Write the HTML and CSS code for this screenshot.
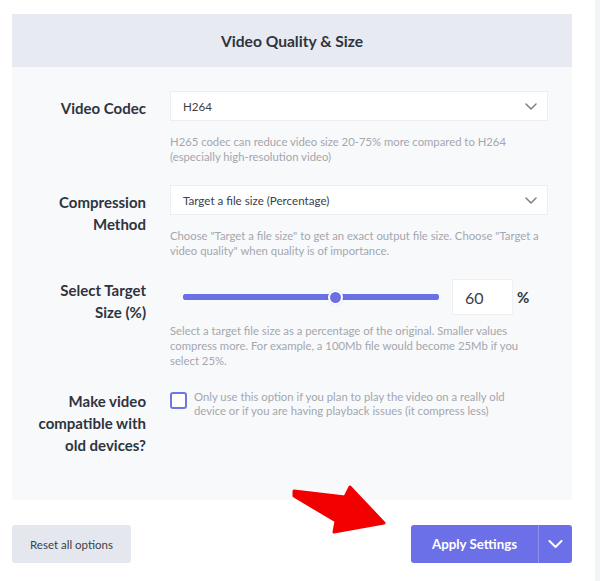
FILE: index.html
```html
<!DOCTYPE html>
<html lang="en">
<head>
    <meta charset="UTF-8">
    <meta name="viewport" content="width=device-width, initial-scale=1.0">
    <title>Video Quality &amp; Size</title>
    <link rel="stylesheet" href="styles.css">
</head>
<body>
<div class="page">
    <div class="main">
        <div class="panel">
            <div class="panel-head">Video Quality &amp; Size</div>
            <div class="panel-body">

                <div class="row">
                    <label class="label">Video Codec</label>
                    <div class="field">
                        <div class="select">
                            <span>H264</span>
                            <svg class="chev" width="12" height="7" viewBox="0 0 12 7"><path d="M1 1l5 5 5-5" fill="none" stroke="#7b8088" stroke-width="1.5" stroke-linecap="round" stroke-linejoin="round"/></svg>
                        </div>
                        <p class="help">H265 codec can reduce video size 20-75% more compared to H264 (especially high-resolution video)</p>
                    </div>
                </div>

                <div class="row">
                    <label class="label">Compression Method</label>
                    <div class="field">
                        <div class="select">
                            <span>Target a file size (Percentage)</span>
                            <svg class="chev" width="12" height="7" viewBox="0 0 12 7"><path d="M1 1l5 5 5-5" fill="none" stroke="#7b8088" stroke-width="1.5" stroke-linecap="round" stroke-linejoin="round"/></svg>
                        </div>
                        <p class="help">Choose "Target a file size" to get an exact output file size. Choose "Target a video quality" when quality is of importance.</p>
                    </div>
                </div>

                <div class="row row-slider">
                    <label class="label">Select Target Size (%)</label>
                    <div class="field">
                        <div class="slider-line">
                            <input type="range" class="range" min="0" max="100" value="60">
                            <input type="text" class="num" value="60">
                            <span class="pct">%</span>
                        </div>
                        <p class="help help-tight">Select a target file size as a percentage of the original. Smaller values compress more. For example, a 100Mb file would become 25Mb if you select 25%.</p>
                    </div>
                </div>

                <div class="row row-check">
                    <label class="label">Make video compatible with old devices?</label>
                    <div class="field check-line">
                        <input type="checkbox" class="check">
                        <p class="help help-check">Only use this option if you plan to play the video on a really old device or if you are having playback issues (it compress less)</p>
                    </div>
                </div>

            </div>
        </div>

        <div class="actions">
            <button class="btn-reset">Reset all options</button>
            <div class="btn-apply">
                <span class="apply-main">Apply Settings</span>
                <span class="apply-drop">
                    <svg width="15" height="8" viewBox="0 0 15 8"><path d="M1.5 1l6 6 6-6" fill="none" stroke="#fff" stroke-width="2" stroke-linecap="round" stroke-linejoin="round"/></svg>
                </span>
            </div>
        </div>

        <svg class="pointer" width="100" height="55" viewBox="0 0 100 55">
            <path d="M5 7 L56 13 L61 3 L95 39 L45 48 L47 37 L5 12 Z" fill="#f20000" stroke="#f20000" stroke-width="3" stroke-linejoin="round"/>
        </svg>
    </div>
    <div class="side"></div>
</div>
</body>
</html>
```

FILE: styles.css
```css
*{
    margin: 0;
    padding: 0;
    box-sizing: border-box;
}
body{
    background: #fff;
    font-family: Lato, "Noto Sans", sans-serif;
    color: #2e3440;
}
.page{
    display: flex;
    min-height: 581px;
}
.main{
    position: relative;
    width: 560px;
    margin: 14px 0 0 12px;
}
.side{
    flex: 1;
    margin-left: 23px;
    background: #f3f4f7;
}

.panel{
    background: #f8f9fb;
}
.panel-head{
    height: 53px;
    background: #e7eaf0;
    display: flex;
    align-items: center;
    justify-content: center;
    font-size: 15.6px;
    font-weight: 700;
    color: #2e3440;
}
.panel-body{
    padding: 24px 24px 44px 0;
    display: flex;
    flex-direction: column;
    gap: 21px;
}

.row{
    display: grid;
    grid-template-columns: 134px 1fr;
    column-gap: 24px;
}
.label{
    text-align: right;
    font-size: 15px;
    font-weight: 700;
    line-height: 22px;
    padding: 6px 0 0 22px;
    color: #2e3440;
}
.row-slider .label{
    padding-top: 0;
}
.row-check{
    margin-top: 1px;
}
.row-check .label{
    padding-top: 0;
}

.select{
    height: 30px;
    background: #fff;
    border: 1px solid #eceef2;
    display: flex;
    align-items: center;
    justify-content: space-between;
    padding: 0 10px 0 12px;
    font-size: 11.6px;
    color: #3c4048;
}
.help{
    margin-top: 13px;
    font-size: 11.3px;
    line-height: 15px;
    color: #a3a7ae;
}
.help-tight{
    margin-top: 8px;
}

.slider-line{
    display: flex;
    align-items: center;
    height: 36px;
}
.range{
    -webkit-appearance: none;
    appearance: none;
    width: 256px;
    height: 6px;
    margin: 0 13px;
    background: #6b70e4;
    border-radius: 3px;
    outline: none;
}
.range::-webkit-slider-runnable-track{
    height: 6px;
    background: #6b70e4;
    border-radius: 3px;
}
.range::-webkit-slider-thumb{
    -webkit-appearance: none;
    width: 15px;
    height: 15px;
    margin-top: -4.5px;
    border-radius: 50%;
    background: #6b70e4;
    border: 2px solid #fff;
    box-shadow: 0 0 2px rgba(0,0,0,0.15);
}
.num{
    width: 61px;
    height: 36px;
    border: 1px solid #eef0f3;
    background: #fff;
    padding-left: 12px;
    font-family: Lato, "Noto Sans", sans-serif;
    font-size: 16px;
    color: #3c4048;
    outline: none;
}
.pct{
    margin-left: 4px;
    font-size: 15px;
    font-weight: 700;
    color: #2e3440;
}

.check-line{
    display: flex;
    align-items: flex-start;
    gap: 7px;
}
.check{
    -webkit-appearance: none;
    appearance: none;
    flex: none;
    width: 17px;
    height: 17px;
    margin-top: 2px;
    border: 2px solid #7075e0;
    border-radius: 3px;
    background: #fff;
}
.help-check{
    margin-top: 0;
    max-width: 325px;
    line-height: 14px;
}

.actions{
    margin-top: 25px;
    display: flex;
    justify-content: space-between;
}
.btn-reset{
    width: 119px;
    height: 38px;
    border: none;
    border-radius: 3px;
    background: #e4e7ee;
    font-family: Lato, "Noto Sans", sans-serif;
    font-size: 11.5px;
    color: #3a3f48;
}
.btn-apply{
    display: flex;
    height: 38px;
    border-radius: 3px;
    background: #6b70e8;
    color: #fff;
}
.apply-main{
    width: 128px;
    display: flex;
    align-items: center;
    justify-content: center;
    font-size: 13.3px;
    font-weight: 700;
    border-right: 1px solid #8d91ee;
}
.apply-drop{
    width: 33px;
    display: flex;
    align-items: center;
    justify-content: center;
}

.pointer{
    position: absolute;
    left: 277px;
    top: 470px;
}
```
